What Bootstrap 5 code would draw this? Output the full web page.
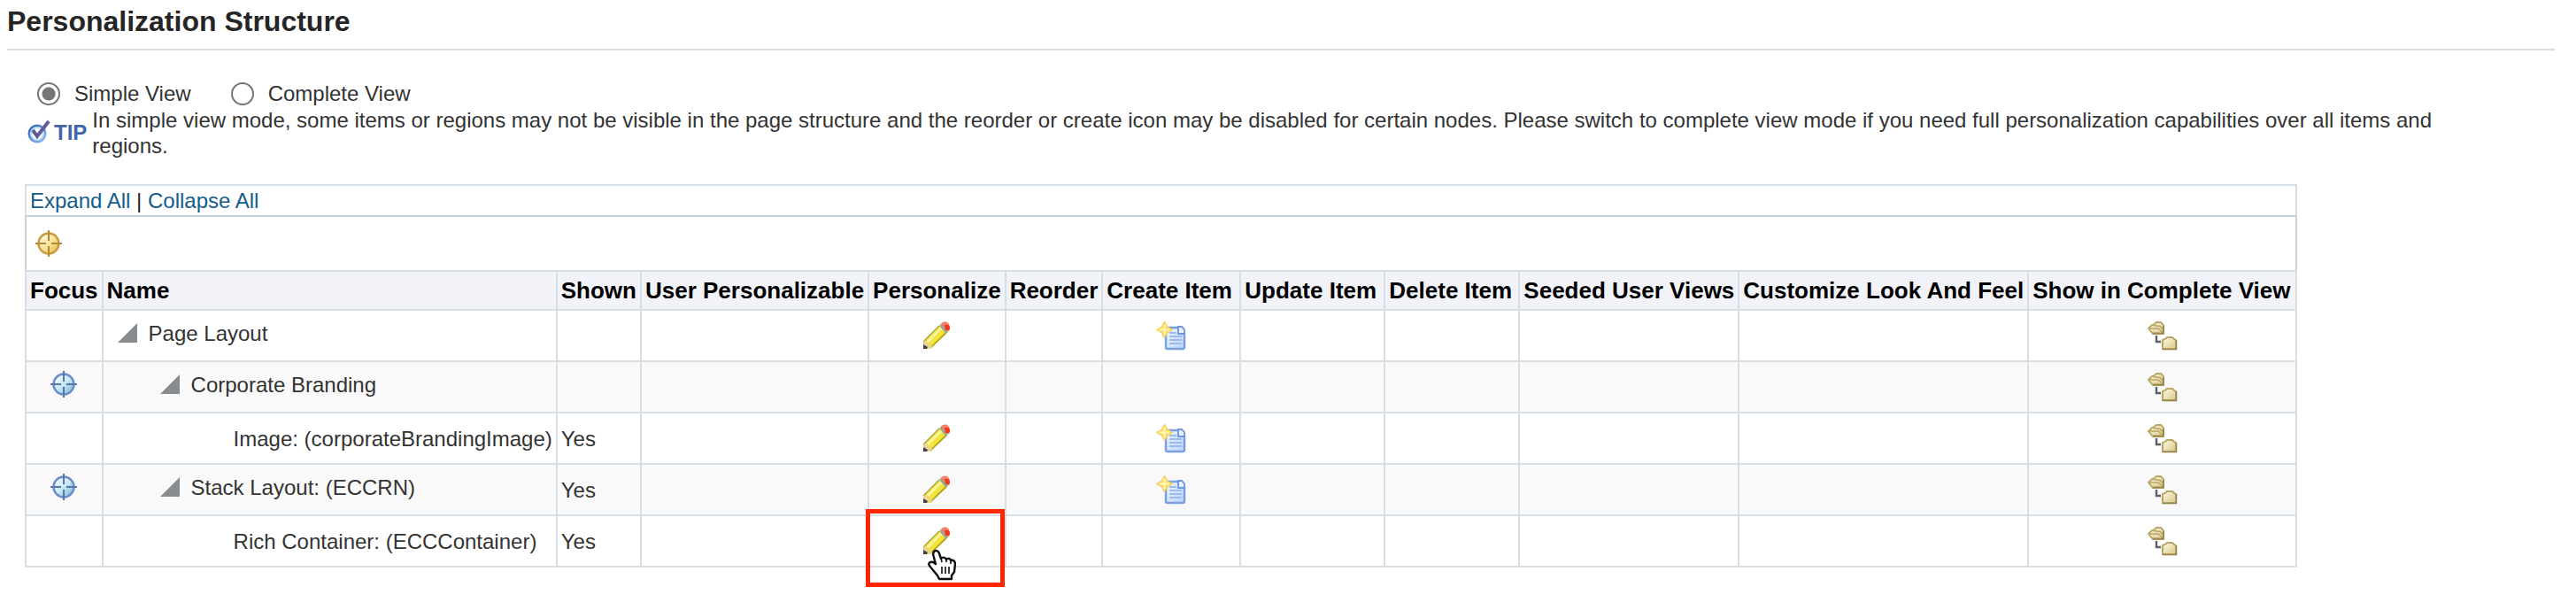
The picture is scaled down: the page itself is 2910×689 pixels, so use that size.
<!DOCTYPE html>
<html lang="en">
<head>
<meta charset="utf-8">
<meta name="viewport" content="width=device-width, initial-scale=1">
<title>Personalization Structure</title>
<link href="https://cdn.jsdelivr.net/npm/bootstrap@5.3.0/dist/css/bootstrap.min.css" rel="stylesheet">
<style>
  body { font-family: "Liberation Sans", Arial, sans-serif; font-size: 24px; line-height: 29px; color: #333; background: #fff; }
  .page { padding: 4px 24px 24px 8px; }
  .page-title { font-size: 32px; line-height: 40px; font-weight: 700; color: #252525; padding-bottom: 11px; border-bottom: 2px solid #d6dfe6; }
  .page-body { padding: 33px 20px 0; }
  .view-choice { gap: 45px; padding-left: 14px; }
  .view-choice label { line-height: 31px; }
  .view-radio { appearance: none; width: 26px; height: 26px; margin: 0 16px 0 0; border: 2px solid #767676; border-radius: 50%; background: #fff; }
  .view-radio:checked { background: radial-gradient(circle, #767676 0 7px, #fff 8px); }
  .tip-row { gap: 6px; margin-bottom: 29px; padding: 0 48px 0 3px; }
  .tip-word { color: #4166a8; font-weight: 700; }
  .tip-label { padding-bottom: 2px; }
  .structure { width: auto; border-collapse: collapse; color: #333; white-space: nowrap; }
  .structure th, .structure td { border: 2px solid #d6dfe6; padding: 0 4px; vertical-align: middle; }
  .structure a { color: #145c8a; text-decoration: none; }
  .structure .links-row td { height: 35px; color: #222; border-bottom-color: #c9d3db; }
  .structure .tools-row td { height: 62px; padding-left: 10px; border-left-color: #c9d3db; border-right-color: #c9d3db; }
  .structure .head-row th { height: 44px; font-size: 26px; color: #000; background: #f2f3f8; }
  .structure .node-row td { height: 58px; }
  .structure .node-row:nth-child(even) td { background: #f9f9f9; }
  .structure .raised { padding-bottom: 6px; }
  .col-create { width: 156px; }
  .col-update { width: 163px; }
  .col-delete { width: 152px; }
  .col-complete { width: 303px; }
  .icon-btn { display: block; margin: 0 auto; padding: 0; border: 0; background: none; line-height: 0; }
  .level-1 { padding-left: 12px; }
  .level-2 { padding-left: 60px; }
  .level-3 { padding-left: 143px; }
  .tree { gap: 13px; }
  .highlight { position: absolute; inset: -8px 0 -24px -4px; border: 5px solid #ff2600; pointer-events: none; }
  .hand { position: absolute; left: 66px; top: 37px; pointer-events: none; }
</style>
</head>
<body>
<svg width="0" height="0" class="position-absolute" aria-hidden="true">
  <defs>
    <linearGradient id="gBlue" x1="0" y1="0" x2="1" y2="1"><stop offset="0" stop-color="#fff"/><stop offset=".5" stop-color="#c8e8f3"/><stop offset="1" stop-color="#78b3d2"/></linearGradient>
    <linearGradient id="gGold" x1="0" y1="0" x2="1" y2="1"><stop offset="0" stop-color="#fffdf2"/><stop offset=".5" stop-color="#fbe7a2"/><stop offset="1" stop-color="#e0b53c"/></linearGradient>
    <linearGradient id="gDoc" x1="0" y1="0" x2="1" y2="1"><stop offset="0" stop-color="#f2f7ff"/><stop offset="1" stop-color="#bdd3fa"/></linearGradient>
    <linearGradient id="gFold" x1="0" y1="0" x2="1" y2="1"><stop offset="0" stop-color="#fffbe6"/><stop offset="1" stop-color="#d8c88a"/></linearGradient>
    <linearGradient id="gTip" x1="0" y1="0" x2="1" y2="1"><stop offset="0" stop-color="#2f62ba"/><stop offset="1" stop-color="#86bdf4"/></linearGradient>
    <symbol id="blueTarget" viewBox="0 0 30 30">
      <circle cx="15" cy="15" r="11.5" fill="url(#gBlue)" stroke="#6d8dc6" stroke-width="2.4"/>
      <path d="M15 0v12M15 18v12M0 15h12M18 15h12" stroke="#5674ad" stroke-width="2"/>
    </symbol>
    <symbol id="goldTarget" viewBox="0 0 30 30">
      <circle cx="15" cy="15" r="11.5" fill="url(#gGold)" stroke="#c99c40" stroke-width="2.4"/>
      <path d="M15 0v12M15 18v12M0 15h12M18 15h12" stroke="#b58a35" stroke-width="2"/>
    </symbol>
    <symbol id="pencil" viewBox="0 0 32 32">
      <path d="M1 23 19 5l8 8L9 31H1z" fill="#f3e43a"/>
      <path d="M4 23 21 6l2 2L6 25z" fill="#fbf5a0"/>
      <path d="M10 28 26 12l1 2L9 31z" fill="#b2a51c"/>
      <path d="M1 23 19 5" stroke="#aaa548" stroke-width="1.5"/>
      <path d="M1 23l4-1 6 6-2 3H1z" fill="#ecd58b"/>
      <path d="M1 26l5 3-1 2H1z" fill="#41414c"/>
      <path d="M19 5l3-3 8 8-3 4z" fill="#9da58b"/>
      <path d="M21 3c2-3 6-3 8-1s3 6 1 9z" fill="#f28061"/>
      <path d="M25 4h4c3 2 2 5 1 6h-4z" fill="#f8361f"/>
    </symbol>
    <symbol id="newItem" viewBox="0 0 34 34">
      <path d="M14 8h12l6 6v16q0 2-2 2H13q-2 0-2-2V11q0-3 3-3z" fill="url(#gDoc)" stroke="#789fe0" stroke-width="2.4"/>
      <path d="M25 7v8h7V10l-3-3z" fill="#e9f1ff" stroke="#6e96dc" stroke-width="1.8"/>
      <path d="M15 14h8M15 18h14M15 22h14M15 26h14" stroke="#9bbcf3" stroke-width="1.8"/>
      <path d="M9.500 1l3.200 6 6 3.500-6 3.500-3.200 6-3.200-6-6-3.500 6-3.500z" fill="#ffdc68" stroke="#f8c85b" stroke-width="1"/>
      <path d="M9.500 5v11M4 10.500h11" stroke="#fff8b8" stroke-width="2"/>
    </symbol>
    <symbol id="showTree" viewBox="0 0 34 34">
      <path d="M1 9l4-4 3-1 2-2h5l3 3v10H6z" fill="url(#gFold)" stroke="#b9a765" stroke-width="1.800"/>
      <path d="M2 9h10l5 4M6 5.500l8 1 3 3" fill="none" stroke="#b9a765" stroke-width="1.600"/>
      <path d="M6 14.500h12V6" fill="none" stroke="#9a894a" stroke-width="2"/>
      <path d="M10 17v7h5" fill="none" stroke="#5f5f67" stroke-width="2.400"/>
      <path d="M17 22l3-1 2-2h6l2 2 2 1v10H17z" fill="url(#gFold)" stroke="#b9a765" stroke-width="2"/>
      <path d="M17 32.500h15.500V22" fill="none" stroke="#93834a" stroke-width="1.500"/>
    </symbol>
    <symbol id="openNode" viewBox="0 0 22 22"><path d="M22 0v22H0z" fill="#878c90"/></symbol>
  </defs>
</svg>

<main class="page">
  <h1 class="page-title mb-0">Personalization Structure</h1>
  <div class="page-body">
    <div class="view-choice d-flex">
      <div class="d-flex align-items-center"><input class="view-radio" type="radio" name="view" id="simple" checked><label for="simple">Simple View</label></div>
      <div class="d-flex align-items-center"><input class="view-radio" type="radio" name="view" id="complete"><label for="complete">Complete View</label></div>
    </div>
    <div class="tip-row d-flex align-items-center">
      <div class="tip-label d-flex align-items-center flex-shrink-0">
        <svg class="me-1" width="26" height="28" viewBox="0 0 26 28" aria-hidden="true">
          <circle cx="11" cy="16" r="9" fill="#fff" stroke="url(#gTip)" stroke-width="3"/>
          <circle cx="11" cy="16" r="7" fill="none" stroke="#c5dcf7" stroke-width="2"/>
          <path d="M6 12l5 7L24 2" fill="none" stroke="#605a96" stroke-width="4"/>
        </svg>
        <span class="tip-word">TIP</span>
      </div>
      <div>In simple view mode, some items or regions may not be visible in the page structure and the reorder or create icon may be disabled for certain nodes. Please switch to complete view mode if you need full personalization capabilities over all items and regions.</div>
    </div>

    <table class="structure">
      <thead>
        <tr class="links-row"><td colspan="12"><a href="#">Expand All</a> | <a href="#">Collapse All</a></td></tr>
        <tr class="tools-row"><td colspan="12"><button type="button" class="icon-btn ms-0" aria-label="Focus"><svg width="30" height="30"><use href="#goldTarget"/></svg></button></td></tr>
        <tr class="head-row"><th>Focus</th><th>Name</th><th>Shown</th><th>User Personalizable</th><th>Personalize</th><th>Reorder</th><th class="col-create">Create Item</th><th class="col-update">Update Item</th><th class="col-delete">Delete Item</th><th>Seeded User Views</th><th>Customize Look And Feel</th><th class="col-complete">Show in Complete View</th></tr>
      </thead>
      <tbody>
        <tr class="node-row">
          <td></td>
          <td class="raised"><div class="tree level-1 d-flex align-items-center"><button type="button" class="icon-btn m-0" aria-label="Collapse"><svg width="22" height="22"><use href="#openNode"/></svg></button>Page Layout</div></td>
          <td></td><td></td>
          <td><button type="button" class="icon-btn" aria-label="Personalize"><svg width="32" height="32"><use href="#pencil"/></svg></button></td>
          <td></td>
          <td><button type="button" class="icon-btn" aria-label="Create Item"><svg width="34" height="34"><use href="#newItem"/></svg></button></td>
          <td></td><td></td><td></td><td></td>
          <td><button type="button" class="icon-btn" aria-label="Show in Complete View"><svg width="34" height="34"><use href="#showTree"/></svg></button></td>
        </tr>
        <tr class="node-row">
          <td class="raised"><button type="button" class="icon-btn" aria-label="Focus"><svg width="30" height="30"><use href="#blueTarget"/></svg></button></td>
          <td class="raised"><div class="tree level-2 d-flex align-items-center"><button type="button" class="icon-btn m-0" aria-label="Collapse"><svg width="22" height="22"><use href="#openNode"/></svg></button>Corporate Branding</div></td>
          <td></td><td></td><td></td><td></td><td></td><td></td><td></td><td></td><td></td>
          <td><button type="button" class="icon-btn" aria-label="Show in Complete View"><svg width="34" height="34"><use href="#showTree"/></svg></button></td>
        </tr>
        <tr class="node-row">
          <td></td>
          <td><div class="level-3">Image: (corporateBrandingImage)</div></td>
          <td>Yes</td><td></td>
          <td><button type="button" class="icon-btn" aria-label="Personalize"><svg width="32" height="32"><use href="#pencil"/></svg></button></td>
          <td></td>
          <td><button type="button" class="icon-btn" aria-label="Create Item"><svg width="34" height="34"><use href="#newItem"/></svg></button></td>
          <td></td><td></td><td></td><td></td>
          <td><button type="button" class="icon-btn" aria-label="Show in Complete View"><svg width="34" height="34"><use href="#showTree"/></svg></button></td>
        </tr>
        <tr class="node-row">
          <td class="raised"><button type="button" class="icon-btn" aria-label="Focus"><svg width="30" height="30"><use href="#blueTarget"/></svg></button></td>
          <td class="raised"><div class="tree level-2 d-flex align-items-center"><button type="button" class="icon-btn m-0" aria-label="Collapse"><svg width="22" height="22"><use href="#openNode"/></svg></button>Stack Layout: (ECCRN)</div></td>
          <td>Yes</td><td></td>
          <td><button type="button" class="icon-btn" aria-label="Personalize"><svg width="32" height="32"><use href="#pencil"/></svg></button></td>
          <td></td>
          <td><button type="button" class="icon-btn" aria-label="Create Item"><svg width="34" height="34"><use href="#newItem"/></svg></button></td>
          <td></td><td></td><td></td><td></td>
          <td><button type="button" class="icon-btn" aria-label="Show in Complete View"><svg width="34" height="34"><use href="#showTree"/></svg></button></td>
        </tr>
        <tr class="node-row">
          <td></td>
          <td><div class="level-3">Rich Container: (ECCContainer)</div></td>
          <td>Yes</td><td></td>
          <td class="position-relative"><button type="button" class="icon-btn" aria-label="Personalize"><svg width="32" height="32"><use href="#pencil"/></svg></button>
            <span class="highlight"></span>
            <svg class="hand" width="32" height="36" viewBox="0 0 32 36" aria-hidden="true">
              <path d="M7 3c2-2 5-1 6 2l2 6c1-2 5-2 6 1 2-2 5-1 5 1 3-1 5 1 5 4l-1 9-3 4v4H13l-2-4-5-6-4-5c-2-3 1-5 4-4l3 2L6 6z" fill="#fff" stroke="#111" stroke-width="2.4" stroke-linejoin="round"/>
              <path d="M15 10l1 5M21 11v4M26 13v4M16 20v8M20 20v8M24 20v8" stroke="#111" stroke-width="1.600"/>
            </svg>
          </td>
          <td></td><td></td><td></td><td></td><td></td><td></td>
          <td><button type="button" class="icon-btn" aria-label="Show in Complete View"><svg width="34" height="34"><use href="#showTree"/></svg></button></td>
        </tr>
      </tbody>
    </table>
  </div>
</main>
<script src="https://cdn.jsdelivr.net/npm/bootstrap@5.3.0/dist/js/bootstrap.bundle.min.js"></script>
</body>
</html>
